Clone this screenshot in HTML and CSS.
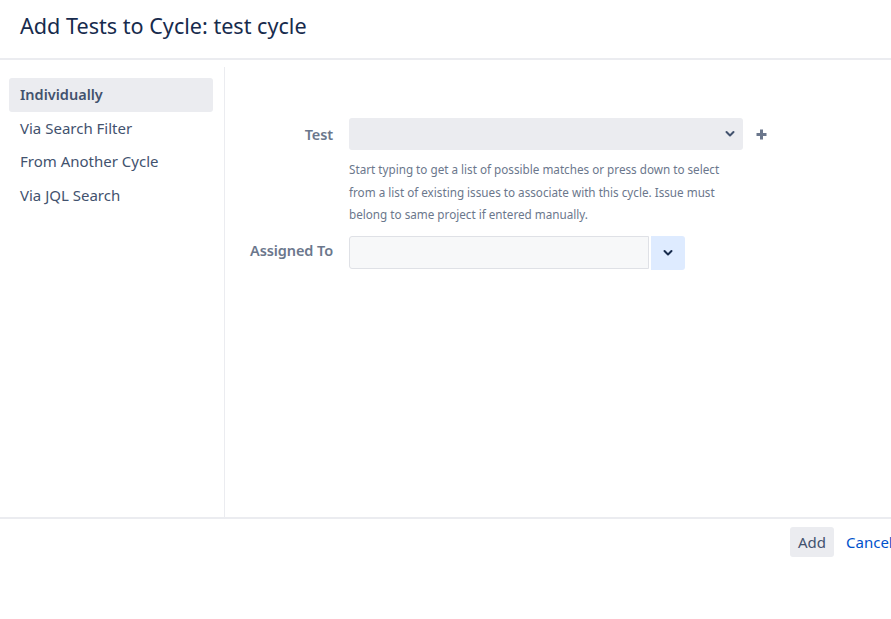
FILE: index.html
```html
<!DOCTYPE html>
<html>
<head>
<meta charset="utf-8">
<link rel="stylesheet" href="styles.css">
</head>
<body>
<div class="dialog">
  <header class="dialog-header">
    <h2 class="dialog-title">Add Tests to Cycle: test cycle</h2>
  </header>
  <div class="dialog-body">
    <nav class="side-nav">
      <div class="nav-item active">Individually</div>
      <div class="nav-item">Via Search Filter</div>
      <div class="nav-item">From Another Cycle</div>
      <div class="nav-item">Via JQL Search</div>
    </nav>
    <main class="content">
      <div class="field">
        <label class="field-label label-test">Test</label>
        <div class="field-control">
          <div class="test-row">
            <div class="select-box">
              <svg class="chev" width="10" height="8" viewBox="0 0 10 8"><path d="M1.5 2 L5 5.5 L8.5 2" fill="none" stroke="#42526e" stroke-width="2" stroke-linecap="round" stroke-linejoin="round"/></svg>
            </div>
            <svg class="plus" width="13" height="13" viewBox="0 0 13 13"><path d="M6.5 1.5 V11.5 M1.5 6.5 H11.5" stroke="#6b778c" stroke-width="3"/></svg>
          </div>
          <p class="help">Start typing to get a list of possible matches or press down to select from a list of existing issues to associate with this cycle. Issue must belong to same project if entered manually.</p>
        </div>
      </div>
      <div class="field field-assign">
        <label class="field-label label-assign">Assigned To</label>
        <div class="field-control assign-row">
          <div class="assign-input"></div>
          <div class="assign-btn">
            <svg width="10" height="8" viewBox="0 0 10 8"><path d="M1.5 2 L5 5.5 L8.5 2" fill="none" stroke="#172b4d" stroke-width="2" stroke-linecap="round" stroke-linejoin="round"/></svg>
          </div>
        </div>
      </div>
    </main>
  </div>
  <footer class="dialog-footer">
    <button class="btn-add">Add</button>
    <a class="btn-cancel">Cancel</a>
  </footer>
</div>
</body>
</html>
```

FILE: styles.css
```css
html, body {
  margin: 0;
  padding: 0;
  background: #fff;
  overflow: hidden;
}
body {
  font-family: "Noto Sans", "Open Sans", sans-serif;
  color: #172b4d;
  width: 891px;
  height: 619px;
}
.dialog {
  width: 905px;
}
.dialog-header {
  height: 58px;
  border-bottom: 2px solid #ebecf0;
  display: flex;
  align-items: center;
  padding-left: 20px;
}
.dialog-title {
  margin: 0;
  font-size: 21.6px;
  font-weight: 400;
  color: #172b4d;
  position: relative;
  top: -4px;
}
.dialog-body {
  display: flex;
  height: 457px;
}
.side-nav {
  width: 225px;
  flex: none;
  border-right: 1px solid #ebecf0;
  margin-top: 7px;
  padding-top: 11px;
  box-sizing: border-box;
  padding-left: 9px;
  padding-right: 11px;
}
.nav-item {
  height: 33.5px;
  line-height: 33.5px;
  padding-left: 11px;
  font-size: 15px;
  color: #42526e;
  border-radius: 3px;
}
.nav-item.active {
  background: #ebecf0;
  font-weight: 600;
  font-size: 14.5px;
}
.content {
  flex: 1;
  padding-top: 58px;
}
.field {
  display: flex;
}
.field-label {
  width: 108px;
  text-align: right;
  font-size: 14.5px;
  font-weight: 600;
  color: #6b778c;
  padding-right: 16px;
  flex: none;
  letter-spacing: -0.1px;
}
.label-test {
  line-height: 32px;
}
.label-assign {
  line-height: 28px;
}
.test-row {
  display: flex;
  align-items: center;
}
.select-box {
  width: 394px;
  height: 32px;
  background: #ebecf0;
  border-radius: 3px;
  display: flex;
  align-items: center;
  justify-content: flex-end;
  padding-right: 8px;
  box-sizing: border-box;
}
.plus {
  margin-left: 12px;
}
.help {
  margin: 8px 0 0;
  width: 386px;
  font-size: 11.7px;
  line-height: 22.5px;
  color: #6b778c;
}
.field-assign {
  margin-top: 10px;
}
.assign-row {
  display: flex;
}
.assign-input {
  width: 300px;
  height: 33px;
  box-sizing: border-box;
  background: #f7f8f9;
  border: 1px solid #dfe1e6;
  border-radius: 3px 0 0 3px;
}
.assign-btn {
  width: 34px;
  height: 34px;
  margin-left: 2px;
  background: #deebff;
  border-radius: 0 3px 3px 0;
  display: flex;
  align-items: center;
  justify-content: center;
}
.dialog-footer {
  border-top: 2px solid #ebecf0;
  display: flex;
  align-items: center;
  padding-top: 8px;
  padding-left: 790px;
}
.btn-add {
  height: 30px;
  padding: 0 8px;
  border: none;
  border-radius: 3px;
  background: #ebecf0;
  color: #42526e;
  font-family: "Noto Sans", "Open Sans", sans-serif;
  font-size: 15px;
}
.btn-cancel {
  margin-left: 12px;
  font-size: 15px;
  color: #0052cc;
}
```
